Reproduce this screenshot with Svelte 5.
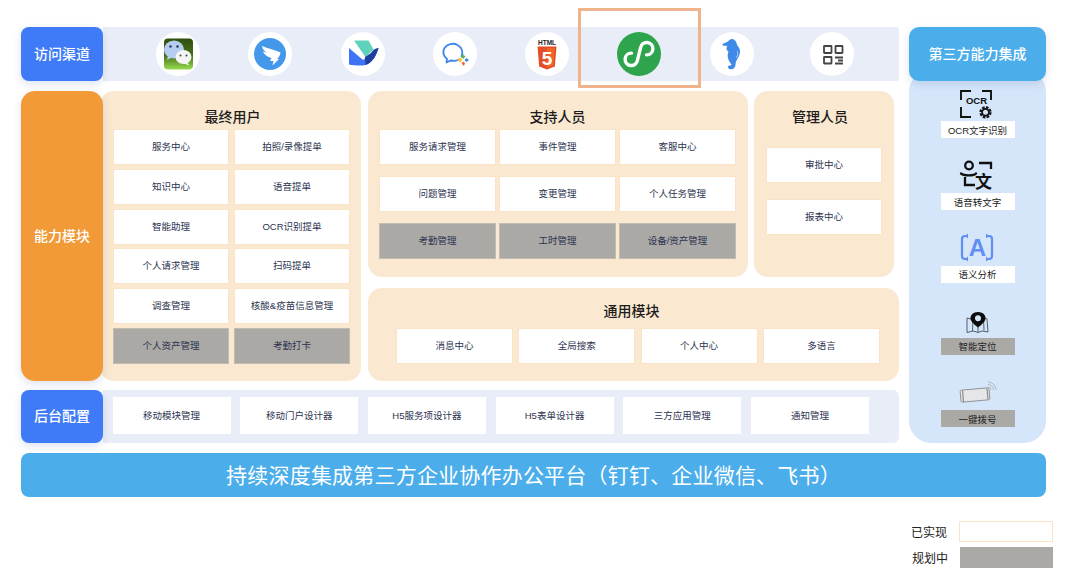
<script>
    const userCells = [
        { name: '服务中心' }, { name: '拍照/录像提单' },
        { name: '知识中心' }, { name: '语音提单' },
        { name: '智能助理' }, { name: 'OCR识别提单' },
        { name: '个人请求管理' }, { name: '扫码提单' },
        { name: '调查管理' }, { name: '核酸&疫苗信息管理' },
        { name: '个人资产管理', planned: true }, { name: '考勤打卡', planned: true }
    ];
    const supportCells = [
        { name: '服务请求管理' }, { name: '事件管理' }, { name: '客服中心' },
        { name: '问题管理' }, { name: '变更管理' }, { name: '个人任务管理' },
        { name: '考勤管理', planned: true }, { name: '工时管理', planned: true }, { name: '设备/资产管理', planned: true }
    ];
    const managerCells = ['审批中心', '报表中心'];
    const commonCells = ['消息中心', '全局搜索', '个人中心', '多语言'];
    const adminCells = ['移动模块管理', '移动门户设计器', 'H5服务项设计器', 'H5表单设计器', '三方应用管理', '通知管理'];
</script>

<div class="page">
    <div class="board">
        <div class="main">
            <section class="row channels-row">
                <div class="tag blue">访问渠道</div>
                <div class="channels">
                    <svg class="channel" viewBox="0 0 44 44">
                        <defs>
                            <linearGradient id="wx" x1="0" y1="0" x2="0" y2="1">
                                <stop offset="0" stop-color="#2f4d10" />
                                <stop offset="0.55" stop-color="#47701c" />
                                <stop offset="1" stop-color="#97dc50" />
                            </linearGradient>
                        </defs>
                        <circle cx="22" cy="22" r="22" fill="#fff" />
                        <rect x="8" y="6.500" width="29" height="31" rx="4" fill="url(#wx)" />
                        <ellipse cx="18" cy="17.500" rx="10" ry="9" fill="#b4cdf0" />
                        <path d="M12 23l-1 5 6-3z" fill="#b4cdf0" />
                        <circle cx="14.500" cy="14.500" r="1.300" fill="#2c3e60" />
                        <circle cx="21.500" cy="14.500" r="1.300" fill="#2c3e60" />
                        <ellipse cx="27.500" cy="25" rx="8" ry="7" fill="#f4f5f3" />
                        <path d="M31 30l2.500 3.500-6-2z" fill="#f4f5f3" />
                        <circle cx="24.500" cy="23.500" r="1" fill="#444" />
                        <circle cx="30.500" cy="23.500" r="1" fill="#444" />
                    </svg>
                    <svg class="channel" viewBox="0 0 44 44">
                        <circle cx="22" cy="22" r="22" fill="#fff" />
                        <circle cx="22" cy="22" r="16" fill="#4498ea" />
                        <path d="M14 14c6 2.500 13 4 18.500 6.500-.3 2.500-1.800 5-3.500 6.500h2l-6.500 6.500 1-4.500h-3.500l1.500-3c-4-1-7.500-3.500-8.500-6.500l5 1.500c-3-1-5.500-3.500-6-7z" fill="#fff" />
                    </svg>
                    <svg class="channel" viewBox="0 0 44 44">
                        <circle cx="22" cy="22" r="22" fill="#fff" />
                        <path d="M13 8.500h14.500l5 9-8 7.500z" fill="#5fd2bb" />
                        <path d="M8 16l14 12 8-6c2-3 4-5 7.500-6-2 7-6 15-13 17-4 1-11 .5-16.500-.5z" fill="#3d74f5" />
                        <path d="M24 25l6-4c2-3 4-4.500 7.500-5-2 7-6 15-13 17z" fill="#1f3f9e" />
                    </svg>
                    <svg class="channel" viewBox="0 0 44 44">
                        <circle cx="22" cy="22" r="22" fill="#fff" />
                        <path d="M28.500 24.500c2-4 .5-9-4-11.500-4.500-2.500-10.500-1-13 3-2.300 4-1 8.500 2.500 11l-.5 3.500 4-2c3 .7 6 .4 8-.7" fill="none" stroke="#3b86ec" stroke-width="1.800" stroke-linejoin="round" stroke-linecap="round" />
                        <path d="M30 22.500l2.500 2-2.500 2.500-2-2.500z" fill="#5db54a" />
                        <path d="M27 25.500l2.500 2.500-2.500 2.500-3-2.500z" fill="#f2c13c" />
                        <path d="M30 29.500l2 1.500-1 3-2.500-2.500z" fill="#e9683c" />
                        <path d="M33.500 26l2.500 2-2.500 2-2-2z" fill="#3b86ec" />
                    </svg>
                    <svg class="channel" viewBox="0 0 44 44">
                        <circle cx="22" cy="22" r="22" fill="#fff" />
                        <text class="html-word" x="22" y="13" text-anchor="middle">HTML</text>
                        <path d="M12.500 14.500h19l-1.700 20-7.800 3-7.800-3z" fill="#e44d26" />
                        <path d="M22 16v20l6.300-2.500 1.400-17.500z" fill="#f16529" />
                        <text class="html-five" x="22" y="32.500" text-anchor="middle">5</text>
                    </svg>
                    <svg class="channel" viewBox="0 0 44 44">
                        <circle cx="22" cy="22" r="22" fill="#2ea44d" />
                        <path d="M14.500 23A6.200 6.200 0 1 0 22 28.500V15.500A6.200 6.200 0 1 1 29.500 21" transform="rotate(14 22 22)" fill="none" stroke="#fff" stroke-width="3.400" stroke-linecap="round" />
                    </svg>
                    <svg class="channel" viewBox="0 0 44 44">
                        <circle cx="22" cy="22" r="22" fill="#fff" />
                        <path d="M22.500 7c2.500.8 4.500 3 4.500 6 3 3 4 7 2 11-1.200 3-3.500 5-3.500 8.500 0 3.500-3 5.500-6 4.500-2-.8-2-3 0-3.700 1.500.7 2.500-.3 1.500-1.500-2.500-3-4.500-8-2.500-11.800-2-2-3-4-1-6l-5-.5v-1.500l5.500-2.500c1-1.500 2.500-2.500 4-2.500z" fill="#3f8ae8" />
                        <path d="M27 19c1.500 2 1 5-1 7" fill="none" stroke="#cfe2fa" stroke-width="0.800" />
                    </svg>
                    <svg class="channel last" viewBox="0 0 44 44">
                        <circle cx="22" cy="22" r="22" fill="#fff" />
                        <g fill="none" stroke="#444" stroke-width="1.800">
                            <rect x="14" y="14" width="7.500" height="7" rx="0.500" />
                            <rect x="25.500" y="14" width="7" height="7" rx="0.500" />
                            <rect x="14" y="25" width="7.500" height="6.500" rx="0.500" />
                            <path d="M25 25.500h8M28 28.500h5M25 31.500h8" />
                        </g>
                    </svg>
                </div>
            </section>

            <section class="row modules-row">
                <div class="tag orange">能力模块</div>
                <div class="card user-card">
                    <h3>最终用户</h3>
                    <div class="user-grid">
                        {#each userCells as cell}
                            <div class="cell" class:planned={cell.planned}>{cell.name}</div>
                        {/each}
                    </div>
                </div>
                <div class="side">
                    <div class="side-top">
                        <div class="card support-card">
                            <h3>支持人员</h3>
                            <div class="support-grid">
                                {#each supportCells as cell}
                                    <div class="cell" class:planned={cell.planned}>{cell.name}</div>
                                {/each}
                            </div>
                        </div>
                        <div class="card manager-card">
                            <h3>管理人员</h3>
                            <div class="manager-list">
                                {#each managerCells as name}
                                    <div class="cell">{name}</div>
                                {/each}
                            </div>
                        </div>
                    </div>
                    <div class="card common-card">
                        <h3>通用模块</h3>
                        <div class="common-grid">
                            {#each commonCells as name}
                                <div class="cell">{name}</div>
                            {/each}
                        </div>
                    </div>
                </div>
            </section>

            <section class="row admin-row">
                <div class="tag blue">后台配置</div>
                <div class="admin">
                    {#each adminCells as name}
                        <div class="admin-cell">{name}</div>
                    {/each}
                </div>
            </section>
        </div>

        <aside class="third">
            <div class="third-tag">第三方能力集成</div>
            <div class="third-panel">
                <div class="ability">
                    <svg class="ability-icon" viewBox="0 0 40 34">
                        <path d="M3 13V4h10M24 4h9v9M3 20v10h10" fill="none" stroke="#111" stroke-width="1.900" />
                        <text class="ocr-word" x="18.500" y="17" text-anchor="middle">OCR</text>
                        <circle cx="27.500" cy="25.300" r="5" fill="none" stroke="#111" stroke-width="2.200" stroke-dasharray="2.600 1.300" />
                        <circle cx="27.500" cy="25.300" r="3.400" fill="none" stroke="#111" stroke-width="1.800" />
                    </svg>
                    <div class="ability-name">OCR文字识别</div>
                </div>
                <div class="ability">
                    <svg class="ability-icon" viewBox="0 0 40 34">
                        <circle cx="11" cy="6.500" r="3.800" fill="none" stroke="#111" stroke-width="2.300" />
                        <path d="M3 14.500c3 2.500 13 2.500 15 0" fill="none" stroke="#111" stroke-width="2.300" stroke-linecap="round" />
                        <path d="M21 4h12v6M7 18v8h10" fill="none" stroke="#111" stroke-width="2.300" />
                        <text class="wen-word" x="25.500" y="28.500" text-anchor="middle">文</text>
                    </svg>
                    <div class="ability-name">语音转文字</div>
                </div>
                <div class="ability">
                    <svg class="ability-icon" viewBox="0 0 40 34">
                        <path d="M10 4H7c-2 0-3 1-3 3v17c0 2 1 3 3 3h3M28 4h3c2 0 3 1 3 3v17c0 2-1 3-3 3h-3" fill="none" stroke="#5f8ff5" stroke-width="2.200" />
                        <path d="M10 1.500v5l-3-2.500zM28 1.500v5l3-2.500zM10 24.500v5l-3-2.500zM28 24.500v5l3-2.500z" fill="#5f8ff5" />
                        <text class="a-word" x="19.500" y="24" text-anchor="middle">A</text>
                    </svg>
                    <div class="ability-name">语义分析</div>
                </div>
                <div class="ability">
                    <svg class="ability-icon" viewBox="0 0 40 34">
                        <path d="M9 14l6 1.500 5-1 6-1 3 1.500 1 13-6-1-4 1.500-5-1.500-6 1.500z M15 15.500l-.5 11.500M20 14.500v13.500M25.500 14l.5 12.500" fill="none" stroke="#4a4f58" stroke-width="0.900" />
                        <path d="M20 8c4.500 0 7.500 2.800 7.500 6.200 0 3-3.500 6-7.500 9.300-4-3.300-7.500-6.300-7.500-9.300C12.500 10.800 15.500 8 20 8z" fill="#0c0c0c" />
                        <circle cx="20" cy="14.300" r="3" fill="#d5e6fa" />
                    </svg>
                    <div class="ability-name planned">智能定位</div>
                </div>
                <div class="ability">
                    <svg class="ability-icon" viewBox="0 0 40 34">
                        <rect x="2.500" y="13" width="29" height="12" rx="1.500" transform="rotate(-5 17 19)" fill="#e6e6e8" stroke="#8c8c90" stroke-width="0.900" />
                        <path d="M4.500 14.500l1 11.500M29 12.500l1 11" stroke="#8c8c90" stroke-width="1.200" />
                        <path d="M30 11a3 3 0 0 1 3 3M30 8.500a5.500 5.500 0 0 1 5.500 5.500M30 6a8 8 0 0 1 8 8" fill="none" stroke="#a8aeb6" stroke-width="0.800" />
                    </svg>
                    <div class="ability-name planned">一键拨号</div>
                </div>
            </div>
        </aside>
    </div>

    <div class="banner">持续深度集成第三方企业协作办公平台（钉钉、企业微信、飞书）</div>

    <div class="legend">
        <div class="legend-row">
            <span>已实现</span>
            <i class="swatch done"></i>
        </div>
        <div class="legend-row">
            <span>规划中</span>
            <i class="swatch todo"></i>
        </div>
    </div>

    <div class="highlight"></div>
</div>

<style>
    :global(body) {
        margin: 0;
        background: #fff;
    }

    .page {
        position: relative;
        box-sizing: border-box;
        width: 1080px;
        height: 576px;
        padding: 27px 0 0 21px;
        overflow: hidden;
        font-family: "Liberation Sans", "Noto Sans CJK SC", sans-serif;
        color: #2c3350;
    }

    .board {
        display: flex;
        gap: 10px;
        width: 1025px;
    }

    .main {
        width: 878px;
    }

    .row {
        display: flex;
    }

    .channels-row {
        height: 54px;
    }

    .modules-row {
        height: 290px;
        margin-top: 10px;
    }

    .admin-row {
        height: 53px;
        margin-top: 9px;
    }

    .tag {
        position: relative;
        z-index: 1;
        flex: none;
        box-sizing: border-box;
        display: flex;
        align-items: center;
        justify-content: center;
        width: 82px;
        padding-bottom: 3px;
        border-radius: 8px;
        font-size: 14px;
        font-weight: 500;
        color: #fff;
        box-shadow: 0 3px 8px rgba(70, 100, 170, 0.18);
    }

    .blue {
        background: #3f7bf7;
    }

    .orange {
        background: #f29a38;
        border-radius: 14px;
    }

    .channels {
        flex: 1;
        display: flex;
        align-items: center;
        gap: 48.3px;
        padding-left: 53px;
        background: #e9edf7;
        border-radius: 0 3px 3px 0;
    }

    .channel {
        flex: none;
        width: 44px;
        height: 44px;
    }

    .channel.last {
        margin-left: 8px;
    }

    .html-word {
        font-size: 6.500px;
        font-weight: 700;
        fill: #222;
    }

    .html-five {
        font-size: 19px;
        font-weight: 700;
        fill: #fff;
    }

    .card {
        box-sizing: border-box;
        background: #fae8d0;
        border-radius: 14px;
    }

    .card h3 {
        box-sizing: border-box;
        height: 38px;
        margin: 0;
        padding-top: 16px;
        font-size: 14px;
        font-weight: 500;
        line-height: 20px;
        text-align: center;
        color: #1c1c1c;
    }

    .user-card {
        flex: none;
        width: 261px;
        margin-left: -3px;
        padding: 0 11px 0 13px;
    }

    .user-card h3 {
        padding-left: 2px;
    }

    .user-grid {
        display: grid;
        grid-template-columns: 116px 116px;
        grid-auto-rows: 36px;
        gap: 3.800px 5px;
    }

    .cell {
        box-sizing: border-box;
        display: flex;
        align-items: center;
        justify-content: center;
        padding-bottom: 2px;
        background: #fff;
        border: 1px solid #fbe3c6;
        font-size: 9.500px;
    }

    .cell.planned {
        background: #aba9a6;
        border-color: #c2bcb0;
    }

    .side {
        flex: none;
        display: flex;
        flex-direction: column;
        width: 531px;
        margin-left: 7px;
    }

    .side-top {
        display: flex;
        gap: 6px;
        height: 186px;
    }

    .support-card {
        width: 380px;
        padding: 0 12px 0 11px;
    }

    .support-grid {
        display: grid;
        grid-template-columns: repeat(3, 117px);
        grid-auto-rows: 36px;
        gap: 11px 3px;
    }

    .manager-card {
        width: 140px;
        padding: 0 12px;
    }

    .manager-card h3 {
        margin-left: -8px;
    }

    .manager-list {
        display: grid;
        grid-auto-rows: 36px;
        gap: 16px;
        margin-top: 18px;
    }

    .common-card {
        flex: 1;
        margin-top: 11px;
        padding: 0 0 0 28px;
    }

    .common-card h3 {
        height: 40px;
        padding: 13px 32px 0 0;
    }

    .common-grid {
        display: grid;
        grid-template-columns: repeat(4, 117px);
        grid-auto-rows: 36px;
        gap: 5.300px;
    }

    .admin {
        flex: 1;
        display: flex;
        gap: 9.700px;
        padding: 7px 0 0 9.500px;
        background: #e9edf7;
        border-radius: 0 6px 6px 0;
    }

    .admin-cell {
        flex: none;
        display: flex;
        align-items: center;
        justify-content: center;
        width: 118px;
        height: 37px;
        padding-bottom: 2px;
        box-sizing: border-box;
        background: #fff;
        font-size: 9.500px;
    }

    .third {
        display: flex;
        flex-direction: column;
        width: 137px;
    }

    .third-tag {
        position: relative;
        z-index: 1;
        box-sizing: border-box;
        display: flex;
        align-items: center;
        justify-content: center;
        height: 54px;
        padding-bottom: 2px;
        background: #4baeea;
        border-radius: 10px;
        font-size: 14px;
        font-weight: 500;
        color: #fff;
        box-shadow: 0 3px 8px rgba(70, 100, 170, 0.18);
    }

    .third-panel {
        flex: 1;
        display: flex;
        flex-direction: column;
        gap: 8.300px;
        margin-top: -11px;
        padding-top: 4px;
        background: #d5e6fa;
        border-radius: 22px;
    }

    .ability {
        display: flex;
        flex-direction: column;
        align-items: center;
        justify-content: flex-end;
        height: 64px;
    }

    .ability-icon {
        flex: none;
        width: 40px;
        height: 34px;
    }

    .ability-name {
        display: flex;
        align-items: center;
        justify-content: center;
        width: 74px;
        height: 17px;
        background: #fff;
        font-size: 9.500px;
        color: #222;
    }

    .ability-name.planned {
        background: #aba9a6;
    }

    .ocr-word {
        font-size: 9.500px;
        font-weight: 700;
        fill: #111;
    }

    .wen-word {
        font-size: 17px;
        font-weight: 700;
        fill: #111;
    }

    .a-word {
        font-size: 24px;
        font-weight: 700;
        fill: #5f8ff5;
    }

    .banner {
        display: flex;
        align-items: center;
        justify-content: center;
        width: 1025px;
        height: 44px;
        margin-top: 10px;
        padding-bottom: 3px;
        box-sizing: border-box;
        background: #4baeea;
        border-radius: 8px;
        font-size: 21px;
        letter-spacing: 0.2px;
        color: #fff;
    }

    .legend {
        display: flex;
        flex-direction: column;
        align-items: flex-end;
        gap: 5px;
        margin: 24px 27px 0 0;
    }

    .legend-row {
        display: flex;
        align-items: center;
        gap: 12px;
        font-size: 12px;
        color: #222;
    }

    .swatch {
        box-sizing: border-box;
        display: block;
        width: 94px;
        height: 21px;
    }

    .done {
        background: #fff;
        border: 1px solid #fbe3c6;
    }

    .todo {
        width: 93px;
        background: #aba9a6;
    }

    .highlight {
        position: absolute;
        left: 578px;
        top: 8px;
        box-sizing: border-box;
        width: 123px;
        height: 80px;
        border: 3px solid #efb48c;
    }
</style>
